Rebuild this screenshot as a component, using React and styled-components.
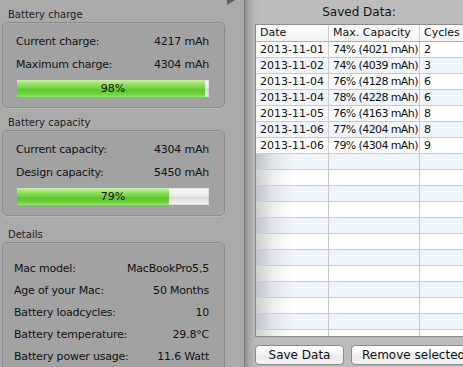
import React from 'react';
import styled, { createGlobalStyle } from 'styled-components';

const GlobalStyle = createGlobalStyle`
  html, body {
    margin: 0;
    padding: 0;
  }
  body {
    width: 463px;
    height: 367px;
    overflow: hidden;
    font-family: "DejaVu Sans", "Liberation Sans", sans-serif;
    color: #111;
  }
`;

const Window = styled.div`
  display: flex;
  width: 463px;
  height: 367px;
  overflow: hidden;
`;

const LeftPanel = styled.div`
  position: relative;
  flex: 0 0 245px;
  box-sizing: border-box;
  padding: 8px 19px 0 2px;
  background: #aaaaaa;
  border-right: 1px solid #7c7c7c;
`;

const Disclosure = styled.svg`
  position: absolute;
  top: -5px;
  left: 227px;
`;

const SectionTitle = styled.div`
  margin-top: ${p => p.$top || 0}px;
  padding-left: 6px;
  height: 14px;
  line-height: 14px;
  font-size: 10px;
  color: #1c1c1c;
`;

const Box = styled.div`
  border: 1px solid #8b8b8b;
  border-radius: 5px;
  background: #a2a2a2;
  box-shadow: 0 1px 0 rgba(255, 255, 255, 0.18), inset 0 1px 0 rgba(255, 255, 255, 0.08);
  padding: ${p => p.$pad};
`;

const Row = styled.div`
  display: flex;
  justify-content: space-between;
  align-items: center;
  height: ${p => p.$h}px;
  font-size: 11px;
  letter-spacing: -0.2px;
  white-space: nowrap;
`;

const Bar = styled.div`
  position: relative;
  margin: 4px 0 0 1px;
  height: 17px;
  background: linear-gradient(#fbfbfb 0%, #ededed 45%, #dcdcdc 55%, #f3f3f3 100%);
  box-shadow: inset 0 0 0 1px rgba(0, 0, 0, 0.08);
`;

const Fill = styled.div`
  height: 100%;
  background: linear-gradient(#c9f4a6 0%, #98e566 22%, #72d341 48%, #5cc52c 60%, #70d440 85%, #9be66d 100%);
`;

const BarLabel = styled.span`
  position: absolute;
  inset: 0;
  display: flex;
  align-items: center;
  justify-content: center;
  font-size: 11px;
  color: #111;
`;

const RightPanel = styled.div`
  flex: 1;
  min-width: 0;
  overflow: hidden;
  padding-left: 10px;
  background: linear-gradient(to right, #8e8e8e 0, #a9a9a9 4px, #b6b6b6 9px, #bcbcbc 14px);
`;

const PanelTitle = styled.div`
  height: 24px;
  line-height: 24px;
  text-align: center;
  font-size: 12px;
  color: #111;
`;

const Table = styled.div`
  box-sizing: border-box;
  width: calc(100% + 40px);
  height: 313px;
  overflow: hidden;
  border: 1px solid #8d8d8d;
  background: #fff;
  font-size: 11px;
`;

const Columns = styled.div`
  display: grid;
  grid-template-columns: 73px 91px 1fr;
`;

const HeaderRow = styled(Columns)`
  height: 17px;
  box-sizing: border-box;
  border-bottom: 1px solid #b4b4b4;
  background: linear-gradient(#ffffff, #f3f3f3);
`;

const HeadCell = styled.div`
  padding-left: 4px;
  line-height: 16px;
  border-right: ${p => (p.$last ? 'none' : '1px solid #cfcfcf')};
  white-space: nowrap;
`;

const BodyRow = styled(Columns)`
  height: 16px;
  box-sizing: border-box;
  border-bottom: 1px solid #cacaca;
  background: ${p => (p.$alt ? '#f0f4fb' : '#ffffff')};
`;

const Cell = styled.div`
  padding-left: 4px;
  line-height: 15px;
  white-space: nowrap;
  overflow: hidden;
  letter-spacing: ${p => (p.$tight ? '-0.6px' : '0')};
  border-right: ${p => (p.$last ? 'none' : '1px solid #cacaca')};
  background: ${p =>
    p.$shade ? 'linear-gradient(to right, rgba(0,0,0,0.2), rgba(0,0,0,0.06) 18px, rgba(0,0,0,0) 38px)' : 'none'};
`;

const Buttons = styled.div`
  display: flex;
  gap: 7px;
  margin-top: 8px;
`;

const Button = styled.button`
  flex-shrink: 0;
  box-sizing: border-box;
  width: ${p => (p.$w ? `${p.$w}px` : 'auto')};
  height: 20px;
  padding: 0 10px;
  border: 1px solid #8a8a8a;
  border-radius: 4px;
  background: linear-gradient(#ffffff 0%, #f6f6f6 45%, #e9e9e9 55%, #f4f4f4 100%);
  font-family: "DejaVu Sans", "Liberation Sans", sans-serif;
  font-size: 12px;
  color: #111;
  white-space: nowrap;
`;

const saved = [
  ['2013-11-01', '74% (4021 mAh)', '2'],
  ['2013-11-02', '74% (4039 mAh)', '3'],
  ['2013-11-04', '76% (4128 mAh)', '6'],
  ['2013-11-04', '78% (4228 mAh)', '6'],
  ['2013-11-05', '76% (4163 mAh)', '8'],
  ['2013-11-06', '77% (4204 mAh)', '8'],
  ['2013-11-06', '79% (4304 mAh)', '9'],
];

const details = [
  ['Mac model:', 'MacBookPro5,5'],
  ['Age of your Mac:', '50 Months'],
  ['Battery loadcycles:', '10'],
  ['Battery temperature:', '29.8°C'],
  ['Battery power usage:', '11.6 Watt'],
];

const Meter = ({ percent }) => (
  <Bar>
    <Fill style={{ width: `${percent}%` }} />
    <BarLabel>{percent}%</BarLabel>
  </Bar>
);

const App = () => {
  const rows = [];
  for (let i = 0; i < 20; i++) {
    const data = saved[i];
    rows.push(
      <BodyRow key={i} $alt={i % 2 === 1}>
        <Cell $shade={!data}>{data ? data[0] : ''}</Cell>
        <Cell $tight>{data ? data[1] : ''}</Cell>
        <Cell $last>{data ? data[2] : ''}</Cell>
      </BodyRow>
    );
  }

  return (
    <Window>
      <GlobalStyle />
      <LeftPanel>
        <Disclosure width="9" height="10" viewBox="0 0 9 10">
          <polygon points="0,0 0,10 8,5" fill="#5c5c5c" />
        </Disclosure>

        <SectionTitle>Battery charge</SectionTitle>
        <Box $pad="7px 15px 10px 13px">
          <Row $h={23}><span>Current charge:</span><span>4217 mAh</span></Row>
          <Row $h={23}><span>Maximum charge:</span><span>4304 mAh</span></Row>
          <Meter percent={98} />
        </Box>

        <SectionTitle $top={8}>Battery capacity</SectionTitle>
        <Box $pad="7px 15px 10px 13px">
          <Row $h={23}><span>Current capacity:</span><span>4304 mAh</span></Row>
          <Row $h={23}><span>Design capacity:</span><span>5450 mAh</span></Row>
          <Meter percent={79} />
        </Box>

        <SectionTitle $top={12}>Details</SectionTitle>
        <Box $pad="14px 15px 20px 11px">
          {details.map(([label, value]) => (
            <Row $h={22} key={label}><span>{label}</span><span>{value}</span></Row>
          ))}
        </Box>
      </LeftPanel>

      <RightPanel>
        <PanelTitle>Saved Data:</PanelTitle>
        <Table>
          <HeaderRow>
            <HeadCell>Date</HeadCell>
            <HeadCell>Max. Capacity</HeadCell>
            <HeadCell $last>Cycles</HeadCell>
          </HeaderRow>
          {rows}
        </Table>
        <Buttons>
          <Button $w={89}>Save Data</Button>
          <Button>Remove selected</Button>
        </Buttons>
      </RightPanel>
    </Window>
  );
};

export default App;
